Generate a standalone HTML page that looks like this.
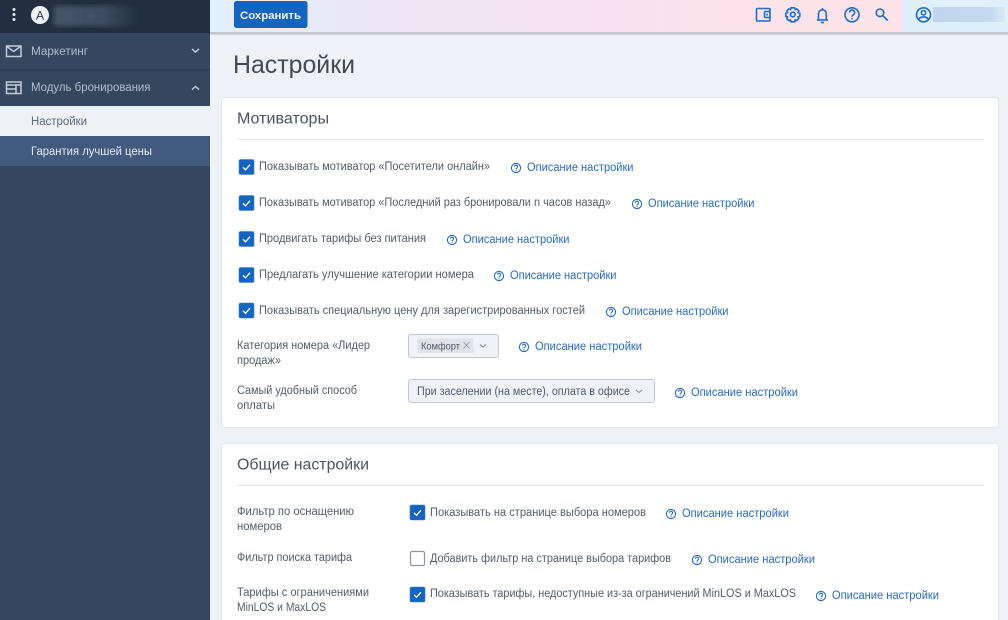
<!DOCTYPE html>
<html lang="ru"><head><meta charset="utf-8"><title>Настройки</title>
<style>
html,body{margin:0;padding:0;width:1008px;height:620px;overflow:hidden;background:#eef1f5}
svg{display:block}
text{font-family:"Liberation Sans",sans-serif;font-size:11.5px;fill:#525c6a}
.l{fill:#2a6bb8;font-size:11.5px}
.ic{fill:none;stroke:#1f6cc4;stroke-width:1.6}
.h{fill:none;stroke:#2a6bb8;stroke-width:1.1}
</style></head><body>
<svg width="1008" height="620" viewBox="0 0 1008 620" xmlns="http://www.w3.org/2000/svg">
<defs>
<linearGradient id="tb" x1="0" x2="1" y1="0" y2="0"><stop offset="0" stop-color="#e2f0fb"/><stop offset=".25" stop-color="#ece6f6"/><stop offset=".5" stop-color="#f6e2f1"/><stop offset=".8" stop-color="#fde3ea"/><stop offset="1" stop-color="#fee4ea"/></linearGradient>
<linearGradient id="nm" x1="0" x2="1" y1="0" y2="0"><stop offset="0" stop-color="#465568"/><stop offset=".6" stop-color="#3f4d60"/><stop offset="1" stop-color="#232f41"/></linearGradient>
<linearGradient id="us" x1="0" x2="1" y1="0" y2="0"><stop offset="0" stop-color="#bfd6ee"/><stop offset=".8" stop-color="#c3d9ef"/><stop offset="1" stop-color="#dbe9f7"/></linearGradient>
<filter id="b"><feGaussianBlur stdDeviation="2.5"/></filter>
<g id="q"><circle cx="0" cy="0" r="4.6" class="h"/><path class="h" d="M-1.6-1.2a1.6 1.6 0 1 1 2.5 1.3C.2.5 0 .8 0 1.4"/><circle cx="0" cy="2.8" r=".6" fill="#2a6bb8"/></g>
<g id="c"><rect width="15" height="15" rx="1.5" fill="#1565c0" stroke="#3d7cc6" stroke-width=".6"/><path d="M4 7.800l2.500 2.500L11 5.200" fill="none" stroke="#fff" stroke-width="1.300"/></g>
</defs>

<rect x="210" width="798" height="620" fill="#eef1f5"/>
<!-- top bar -->
<rect x="210" y="32" width="798" height="2.500" fill="#c3c7cd"/>
<rect x="210" width="692" height="32" fill="url(#tb)"/>
<rect x="902" width="106" height="32" fill="#e1effb"/>
<rect x="234" y="1" width="73.500" height="27" rx="2.500" fill="#1565c0"/>
<text x="240" y="19" textLength="61" lengthAdjust="spacingAndGlyphs" style="font-weight:700;font-size:11px;fill:#f2f7fc">Сохранить</text>

<rect x="756.500" y="8.500" width="13.500" height="12.500" rx="1" class="ic"/><path class="ic" d="M770 11.500h-4.500a1 1 0 0 0-1 1v4a1 1 0 0 0 1 1h4.500"/><circle cx="767" cy="14.600" r="1" fill="#1f6cc4"/>
<circle cx="792.800" cy="14.500" r="2.300" class="ic"/>
<path class="ic" d="M791 7.800h3.600l.5 1.800 1.700-.7 2 2-.8 1.700 1.800.5v3.400l-1.800.5.8 1.700-2 2-1.700-.8-.5 1.900H791l-.5-1.900-1.700.8-2-2 .8-1.700-1.800-.5v-3.400l1.800-.5-.8-1.700 2-2 1.700.7z"/>
<path class="ic" d="M818.500 19.500v-5.800a3.900 3.900 0 0 1 7.800 0v5.800"/><path class="ic" d="M816.800 20h11.200"/><path class="ic" d="M820.800 22.500h3.200"/><path class="ic" d="M822.400 8v1.500"/>
<circle cx="852" cy="14.800" r="7" class="ic"/><path class="ic" d="M849.600 12.500a2.500 2.500 0 1 1 3.800 2.200c-.9.600-1.300 1-1.300 2"/><circle cx="852" cy="18.800" r=".9" fill="#1f6cc4"/>
<circle cx="880" cy="12.800" r="3.800" class="ic" stroke-width="1.700"/><path class="ic" stroke-width="2" d="M883 15.800l4.800 4.700"/>
<circle cx="923.500" cy="14.800" r="7" class="ic"/><circle cx="923.500" cy="12.800" r="2.200" class="ic"/><path class="ic" d="M918.500 19.300c1.300-1.800 3-2.400 5-2.400s3.700.6 5 2.400"/>
<rect x="933" y="7" width="72" height="15" fill="url(#us)"/>

<!-- sidebar -->
<rect width="210" height="620" fill="#34475f"/>
<rect width="210" height="33" fill="#232f41"/>
<rect x="54" y="6" width="82" height="20" fill="url(#nm)" filter="url(#b)"/>
<circle cx="14" cy="9.500" r="1.500" fill="#e6ecf3"/><circle cx="14" cy="14.500" r="1.500" fill="#e6ecf3"/><circle cx="14" cy="19.500" r="1.500" fill="#e6ecf3"/>
<circle cx="40" cy="15" r="9" fill="#eef3f8"/>
<text x="40" y="19.500" text-anchor="middle" style="font-size:12px;fill:#2b3850">A</text>
<rect y="69" width="210" height="1.500" fill="#2b3c53"/>
<path d="M6.500 46h14.500v10.500h-14.500z" fill="none" stroke="#c3ccd8" stroke-width="1.500"/><path d="M7 46.500l6.700 5 6.700-5" fill="none" stroke="#c3ccd8" stroke-width="1.500"/>
<text x="31" y="55" textLength="57" lengthAdjust="spacingAndGlyphs" style="fill:#b4bdca">Маркетинг</text>
<path d="M192 49l3.500 3 3.500-3" fill="none" stroke="#b9c3d0" stroke-width="1.500"/>
<path d="M6.500 82h14.500v11.500h-14.500z" fill="none" stroke="#c3ccd8" stroke-width="1.500"/><path d="M7 85h14M7 89h9M16 85v8.500" fill="none" stroke="#c3ccd8" stroke-width="1.500"/>
<text x="31" y="91" textLength="119.500" lengthAdjust="spacingAndGlyphs" style="fill:#b4bdca">Модуль бронирования</text>
<path d="M192 89.500l3.500-3 3.500 3" fill="none" stroke="#b9c3d0" stroke-width="1.500"/>
<rect y="106" width="210" height="30" fill="#eff2f5"/>
<text x="31" y="125" textLength="56" lengthAdjust="spacingAndGlyphs" style="fill:#5a6a80">Настройки</text>
<rect y="136" width="210" height="30" fill="#425a7e"/>
<text x="31" y="155" textLength="121" lengthAdjust="spacingAndGlyphs" style="fill:#e6eaf0">Гарантия лучшей цены</text>

<text x="233" y="73" textLength="122" lengthAdjust="spacingAndGlyphs" style="font-size:25px;fill:#3f4a5a">Настройки</text>

<!-- card 1 -->
<rect x="221.500" y="97.500" width="777" height="330" rx="3" fill="#fff" stroke="#e1e5ea"/>
<text x="237" y="123.500" textLength="92" lengthAdjust="spacingAndGlyphs" style="font-size:15.500px;fill:#4a5361">Мотиваторы</text>
<rect x="237" y="139" width="747" height="1" fill="#e3e6ea"/>

<use href="#c" x="239" y="159.500"/>
<text x="259" y="170" textLength="231" lengthAdjust="spacingAndGlyphs">Показывать мотиватор «Посетители онлайн»</text>
<use href="#q" x="516" y="168"/><text class="l" x="527" y="171" textLength="106.500" lengthAdjust="spacingAndGlyphs">Описание настройки</text>

<use href="#c" x="239" y="195.500"/>
<text x="259" y="206" textLength="352" lengthAdjust="spacingAndGlyphs">Показывать мотиватор «Последний раз бронировали n часов назад»</text>
<use href="#q" x="637" y="204"/><text class="l" x="648" y="207" textLength="106.500" lengthAdjust="spacingAndGlyphs">Описание настройки</text>

<use href="#c" x="239" y="231.500"/>
<text x="259" y="242" textLength="167" lengthAdjust="spacingAndGlyphs">Продвигать тарифы без питания</text>
<use href="#q" x="452" y="240"/><text class="l" x="463" y="243" textLength="106.500" lengthAdjust="spacingAndGlyphs">Описание настройки</text>

<use href="#c" x="239" y="267.500"/>
<text x="259" y="278" textLength="215" lengthAdjust="spacingAndGlyphs">Предлагать улучшение категории номера</text>
<use href="#q" x="499" y="276"/><text class="l" x="510" y="279" textLength="106.500" lengthAdjust="spacingAndGlyphs">Описание настройки</text>

<use href="#c" x="239" y="303"/>
<text x="259" y="314" textLength="326" lengthAdjust="spacingAndGlyphs">Показывать специальную цену для зарегистрированных гостей</text>
<use href="#q" x="611" y="312"/><text class="l" x="622" y="315" textLength="106.500" lengthAdjust="spacingAndGlyphs">Описание настройки</text>

<text x="237" y="349" textLength="133" lengthAdjust="spacingAndGlyphs">Категория номера «Лидер</text>
<text x="237" y="364" textLength="44" lengthAdjust="spacingAndGlyphs">продаж»</text>
<rect x="408.500" y="334.500" width="90" height="23" rx="2.500" fill="#eff2f6" stroke="#bfc8d6"/>
<rect x="417.500" y="338.500" width="56" height="14.500" rx="1.500" fill="#dfe3e8"/>
<text x="421" y="349.500" textLength="39" lengthAdjust="spacingAndGlyphs" style="font-size:10px;fill:#4e5866">Комфорт</text>
<path d="M463.500 342l6 6.500M469.500 342l-6 6.500" stroke="#8f98a4" stroke-width=".9" fill="none"/>
<path d="M480 344.500l3 2.500 3-2.500" fill="none" stroke="#7d8794" stroke-width="1"/>
<use href="#q" x="524" y="347"/><text class="l" x="535" y="350" textLength="107" lengthAdjust="spacingAndGlyphs">Описание настройки</text>

<text x="237" y="394" textLength="120" lengthAdjust="spacingAndGlyphs">Самый удобный способ</text>
<text x="237" y="409" textLength="38" lengthAdjust="spacingAndGlyphs">оплаты</text>
<rect x="408.500" y="379.500" width="246" height="23" rx="2.500" fill="#eff2f6" stroke="#bfc8d6"/>
<text x="417" y="395" textLength="213" lengthAdjust="spacingAndGlyphs">При заселении (на месте), оплата в офисе</text>
<path d="M636 390l3 2.500 3-2.500" fill="none" stroke="#7d8794" stroke-width="1"/>
<use href="#q" x="680" y="393"/><text class="l" x="691" y="396" textLength="107" lengthAdjust="spacingAndGlyphs">Описание настройки</text>

<!-- card 2 -->
<rect x="221.500" y="443.500" width="777" height="200" rx="3" fill="#fff" stroke="#e1e5ea"/>
<text x="237" y="469.500" textLength="132" lengthAdjust="spacingAndGlyphs" style="font-size:15.500px;fill:#4a5361">Общие настройки</text>
<rect x="237" y="485" width="747" height="1" fill="#e3e6ea"/>

<text x="237" y="515" textLength="117" lengthAdjust="spacingAndGlyphs">Фильтр по оснащению</text>
<text x="237" y="530" textLength="45" lengthAdjust="spacingAndGlyphs">номеров</text>
<use href="#c" x="410" y="505"/>
<text x="430" y="516" textLength="216" lengthAdjust="spacingAndGlyphs">Показывать на странице выбора номеров</text>
<use href="#q" x="671" y="514"/><text class="l" x="682" y="517" textLength="107" lengthAdjust="spacingAndGlyphs">Описание настройки</text>

<text x="237" y="561" textLength="115" lengthAdjust="spacingAndGlyphs">Фильтр поиска тарифа</text>
<rect x="410.500" y="551.500" width="14" height="14" rx="1.500" fill="#fff" stroke="#8c96a3" stroke-width="1.200"/>
<text x="430" y="562" textLength="241" lengthAdjust="spacingAndGlyphs">Добавить фильтр на странице выбора тарифов</text>
<use href="#q" x="697" y="560"/><text class="l" x="708" y="563" textLength="107" lengthAdjust="spacingAndGlyphs">Описание настройки</text>

<text x="237" y="596" textLength="132" lengthAdjust="spacingAndGlyphs">Тарифы с ограничениями</text>
<text x="237" y="611" textLength="89" lengthAdjust="spacingAndGlyphs">MinLOS и MaxLOS</text>
<use href="#c" x="410" y="587"/>
<text x="430" y="597" textLength="366" lengthAdjust="spacingAndGlyphs">Показывать тарифы, недоступные из-за ограничений MinLOS и MaxLOS</text>
<use href="#q" x="821" y="596"/><text class="l" x="832" y="599" textLength="107" lengthAdjust="spacingAndGlyphs">Описание настройки</text>
</svg>
</body></html>
